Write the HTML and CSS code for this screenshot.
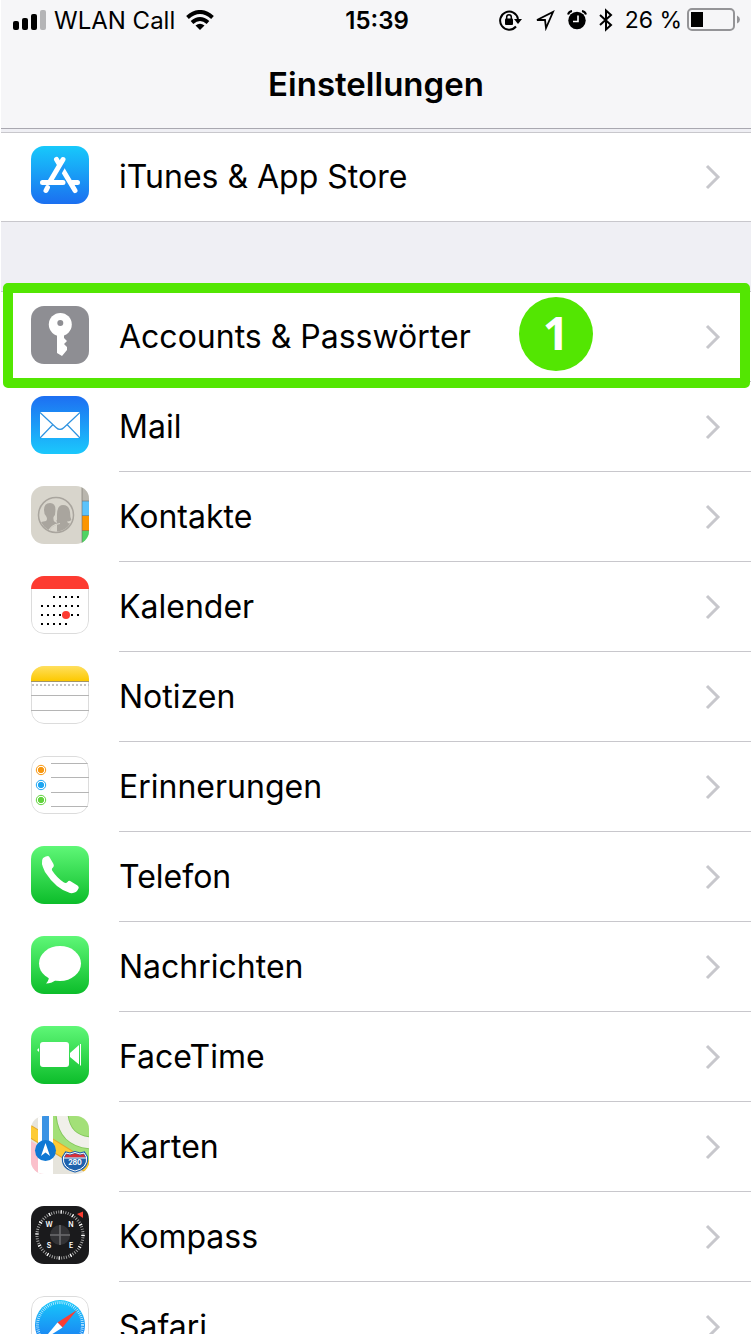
FILE: index.html
```html
<!DOCTYPE html>
<html lang="de">
<head>
    <meta charset="UTF-8">
    <meta name="viewport" content="width=device-width, initial-scale=1.0">
    <title>Einstellungen</title>
    <link rel="stylesheet" href="styles.css">
</head>
<body>
    <div class="phone">
        <header class="header">
            <div class="status-bar">
                <div class="status-left">
                    <svg class="signal" width="34" height="20" viewBox="0 0 34 20">
                        <rect x="0" y="11" width="6" height="9" rx="2"/>
                        <rect x="9" y="8" width="6" height="12" rx="2"/>
                        <rect x="18" y="4" width="6" height="16" rx="2"/>
                        <rect x="27" y="0" width="6" height="20" rx="2" fill="#b4b4b6"/>
                    </svg>
                    <span>WLAN Call</span>
                    <svg class="wifi" width="28" height="20" viewBox="0 0 28 20" fill="none" stroke="#000" stroke-width="4">
                        <path d="M1.500 7.500Q14 -3.500 26.500 7.500"/>
                        <path d="M6 12.500Q14 5.500 22 12.500"/>
                        <path d="M14 20L9.500 15.500Q14 12 18.500 15.500Z" fill="#000" stroke="none"/>
                    </svg>
                </div>
                <span class="time">15:39</span>
                <div class="status-right">
                    <svg width="24" height="22" viewBox="0 0 24 22">
                        <path d="M17 17.500A9 9 0 1 1 19 10" fill="none" stroke="#000" stroke-width="2"/>
                        <path d="M15 10H23L19 15Z"/>
                        <rect x="6" y="9.500" width="8" height="6.500" rx="1"/>
                        <path d="M7.700 10V8a2.300 2.300 0 0 1 4.600 0v2" fill="none" stroke="#000" stroke-width="1.500"/>
                    </svg>
                    <svg width="20" height="22" viewBox="0 0 20 22" fill="none" stroke="#000" stroke-width="1.800">
                        <path d="M2 11L18 3L11 19L10 11Z" stroke-linejoin="miter"/>
                    </svg>
                    <svg width="20" height="22" viewBox="0 0 20 22">
                        <circle cx="10" cy="11.500" r="8.700"/>
                        <path d="M1 5.500Q2 2.500 5 2M19 5.500Q18 2.500 15 2" fill="none" stroke="#000" stroke-width="2"/>
                        <path d="M11 6.500V12.500H6" fill="none" stroke="#fff" stroke-width="1.600"/>
                    </svg>
                    <svg width="14" height="24" viewBox="0 0 14 24" fill="none" stroke="#000" stroke-width="2">
                        <path d="M1 7L12 17L7 21.500V2.500L12 7L1 17"/>
                    </svg>
                    <span class="percent">26 %</span>
                    <svg class="battery" width="54" height="24" viewBox="0 0 54 24">
                        <rect x="1" y="1" width="46" height="21" rx="4" fill="none" stroke="#949497" stroke-width="2"/>
                        <rect x="4" y="4" width="12" height="15"/>
                        <path d="M50 7.500Q53 9 53 11.500Q53 14 50 15.500Z" fill="#949497"/>
                    </svg>
                </div>
            </div>
            <h1 class="title">Einstellungen</h1>
        </header>

        <main>
            <ul class="group group-store">
                <li>
                    <a href="#" class="row">
                        <svg class="app-icon" viewBox="0 0 58 58">
                            <defs>
                                <linearGradient id="store" x1="0" y1="0" x2="0" y2="1"><stop offset="0" stop-color="#17c9fb"/><stop offset="1" stop-color="#1b6ff0"/></linearGradient>
                                <linearGradient id="mail" x1="0" y1="0" x2="0" y2="1"><stop offset="0" stop-color="#1d6ff2"/><stop offset="1" stop-color="#1bc8fc"/></linearGradient>
                                <linearGradient id="green" x1="0" y1="0" x2="0" y2="1"><stop offset="0" stop-color="#5ff777"/><stop offset="1" stop-color="#0cbd2a"/></linearGradient>
                                <linearGradient id="notes" x1="0" y1="0" x2="0" y2="1"><stop offset="0" stop-color="#ffdf5e"/><stop offset="1" stop-color="#fdc900"/></linearGradient>
                            </defs>
                            <rect width="58" height="58" fill="url(#store)"/>
                            <g fill="none" stroke="#fff" stroke-width="5" stroke-linecap="round">
                                <path d="M25.500 13.500L44 44.500"/>
                                <path d="M32 18L22 36" stroke="#1e9bf7" stroke-width="7" stroke-linecap="butt"/>
                                <path d="M32 13.500L19 35.500M16.500 41.500L15 44.500M11.500 36.500H32M41.500 36.500H46.500"/>
                            </g>
                        </svg>
                        <span class="label">iTunes &amp; App Store</span>
                        <svg class="chevron" viewBox="0 0 16 26"><path d="M2 2L13 13L2 24"/></svg>
                    </a>
                </li>
            </ul>

            <ul class="group">
                <li>
                    <a href="#" class="row">
                        <svg class="app-icon" viewBox="0 0 58 58">
                            <rect width="58" height="58" fill="#8e8e93"/>
                            <circle cx="29.300" cy="18.500" r="11.500" fill="#fff"/>
                            <circle cx="29.300" cy="17" r="3" fill="#8e8e93"/>
                            <path d="M26 28H33V32L36 35L33 38L36 41V44L31 50L26 47Z" fill="#fff"/>
                        </svg>
                        <span class="label">Accounts &amp; Passwörter</span>
                        <svg class="chevron" viewBox="0 0 16 26"><path d="M2 2L13 13L2 24"/></svg>
                        <span class="highlight"></span>
                        <span class="step">1</span>
                    </a>
                </li>
                <li>
                    <a href="#" class="row">
                        <svg class="app-icon" viewBox="0 0 58 58">
                            <rect width="58" height="58" fill="url(#mail)"/>
                            <rect x="9" y="16" width="40" height="26" fill="#fff"/>
                            <path d="M9 16.500L25 31.500Q29 35.500 33 31.500L49 16.500M9 42L21.500 29M49 42L36.500 29" fill="none" stroke="#2f93e0" stroke-width="1.200"/>
                        </svg>
                        <span class="label">Mail</span>
                        <svg class="chevron" viewBox="0 0 16 26"><path d="M2 2L13 13L2 24"/></svg>
                    </a>
                </li>
                <li>
                    <a href="#" class="row">
                        <svg class="app-icon" viewBox="0 0 58 58">
                            <rect width="58" height="58" fill="#d8d5cc"/>
                            <rect x="51" width="7" height="15" fill="#b9b6ae"/>
                            <rect x="51" y="15" width="7" height="15" fill="#5cc3fb"/>
                            <rect x="51" y="30" width="7" height="15" fill="#fb9500"/>
                            <rect x="51" y="45" width="7" height="13" fill="#4fd364"/>
                            <path d="M51 0V58M51 15H58M51 29.500H58M51 44.500H58" stroke="#716f69" stroke-opacity=".6"/>
                            <clipPath id="people"><circle cx="25" cy="29" r="16.500"/></clipPath>
                            <g clip-path="url(#people)" fill="#a9a59e">
                                <path d="M26 36Q25 35 26 33Q25 19 32 19Q38 19 39 26Q39 31 40.500 34Q38 35.500 36 35.500L37 37Q43 38 45 42L42 48H26Z"/>
                                <path d="M13 24Q13 17 19 17Q25 17 24.500 25Q24.500 29 22.500 31Q22 35 24 36L28 38Q19 40 18 47H4V39Q8 36 15 35Q17 33 15 30Q13 28 13 24Z"/>
                                <path d="M17.500 47Q18.500 39 29 37.500" fill="none" stroke="#d8d5cc" stroke-width="1.200"/>
                                <path d="M25.300 19V34" stroke="#d8d5cc"/>
                            </g>
                            <circle cx="25" cy="29" r="17.500" fill="none" stroke="#a9a59e" stroke-width="1.500"/>
                        </svg>
                        <span class="label">Kontakte</span>
                        <svg class="chevron" viewBox="0 0 16 26"><path d="M2 2L13 13L2 24"/></svg>
                    </a>
                </li>
                <li>
                    <a href="#" class="row">
                        <svg class="app-icon" viewBox="0 0 58 58">
                            <rect x=".5" y=".5" width="57" height="57" rx="12.500" fill="#fff" stroke="#dcdcdc"/>
                            <rect width="58" height="13" fill="#fd3b31"/>
                            <path d="M22 21H48M10 30H48M10 39H48M10 48H36" stroke="#000" stroke-width="2" stroke-dasharray="2 4"/>
                            <circle cx="35" cy="39" r="4" fill="#fd3b31"/>
                        </svg>
                        <span class="label">Kalender</span>
                        <svg class="chevron" viewBox="0 0 16 26"><path d="M2 2L13 13L2 24"/></svg>
                    </a>
                </li>
                <li>
                    <a href="#" class="row">
                        <svg class="app-icon" viewBox="0 0 58 58">
                            <rect x=".5" y=".5" width="57" height="57" rx="12.500" fill="#fff" stroke="#dcdcdc"/>
                            <rect width="58" height="15" fill="url(#notes)"/>
                            <path d="M0 15.500H58" stroke="#a39566"/>
                            <path d="M1 19H58" stroke="#c4c4c4" stroke-width="2" stroke-dasharray="2 2"/>
                            <path d="M0 29.500H58M0 44.500H58" stroke="#b5b5b5"/>
                        </svg>
                        <span class="label">Notizen</span>
                        <svg class="chevron" viewBox="0 0 16 26"><path d="M2 2L13 13L2 24"/></svg>
                    </a>
                </li>
                <li>
                    <a href="#" class="row">
                        <svg class="app-icon" viewBox="0 0 58 58">
                            <rect x=".5" y=".5" width="57" height="57" rx="12.500" fill="#fff" stroke="#dcdcdc"/>
                            <path d="M20 7.500H57M20 21.500H58M20 36.500H58M20 50.500H57" stroke="#b5b5b5"/>
                            <g fill="#f7960f" stroke="#f7960f"><circle cx="10" cy="14" r="2.700"/><circle cx="10" cy="14" r="4.700" fill="none"/></g>
                            <g fill="#1ca5f2" stroke="#1ca5f2"><circle cx="10" cy="29" r="2.700"/><circle cx="10" cy="29" r="4.700" fill="none"/></g>
                            <g fill="#60d23c" stroke="#60d23c"><circle cx="10" cy="44" r="2.700"/><circle cx="10" cy="44" r="4.700" fill="none"/></g>
                        </svg>
                        <span class="label">Erinnerungen</span>
                        <svg class="chevron" viewBox="0 0 16 26"><path d="M2 2L13 13L2 24"/></svg>
                    </a>
                </li>
                <li>
                    <a href="#" class="row">
                        <svg class="app-icon" viewBox="0 0 58 58">
                            <rect width="58" height="58" fill="url(#green)"/>
                            <path d="M12 12Q15 10 17 10Q18 10 19 12L22.500 18Q23.500 20 22 21.500Q20 23 21.500 25Q26 32 33 36.500Q35 37.500 36.500 36Q38 34 40 35.500L46.500 39.500Q48.500 41 47.500 42.500Q45 48 39 47Q25 43 14 26Q9 16 12 12Z" fill="#fff"/>
                        </svg>
                        <span class="label">Telefon</span>
                        <svg class="chevron" viewBox="0 0 16 26"><path d="M2 2L13 13L2 24"/></svg>
                    </a>
                </li>
                <li>
                    <a href="#" class="row">
                        <svg class="app-icon" viewBox="0 0 58 58">
                            <rect width="58" height="58" fill="url(#green)"/>
                            <ellipse cx="29" cy="27.500" rx="21" ry="17.500" fill="#fff"/>
                            <path d="M18 40Q18 45 15 47.500Q21 47.500 26 43Z" fill="#fff"/>
                        </svg>
                        <span class="label">Nachrichten</span>
                        <svg class="chevron" viewBox="0 0 16 26"><path d="M2 2L13 13L2 24"/></svg>
                    </a>
                </li>
                <li>
                    <a href="#" class="row">
                        <svg class="app-icon" viewBox="0 0 58 58">
                            <rect width="58" height="58" fill="url(#green)"/>
                            <rect x="9" y="16" width="29" height="25" rx="3" fill="#fff"/>
                            <path d="M39 27L48 19V38.500L39 31ZM49 18H50V39.500H49ZM8 22V26L6 24Z" fill="#fff"/>
                        </svg>
                        <span class="label">FaceTime</span>
                        <svg class="chevron" viewBox="0 0 16 26"><path d="M2 2L13 13L2 24"/></svg>
                    </a>
                </li>
                <li>
                    <a href="#" class="row">
                        <svg class="app-icon" viewBox="0 0 58 58">
                            <rect width="58" height="58" fill="#e6e4dc"/>
                            <path d="M20 0H58V50L20 27Z" fill="#a3e078"/>
                            <path d="M0 25L22 38V58H0Z" fill="#fbc0cb"/>
                            <path d="M31 -2Q33 25 60 27" fill="none" stroke="#83c65b" stroke-width="13"/>
                            <path d="M31 -2Q33 25 60 27" fill="none" stroke="#f1f0ea" stroke-width="11"/>
                            <path d="M-3 14L60 53" stroke="#e3a82d" stroke-width="12"/>
                            <path d="M-3 14L60 53" stroke="#fdcb35" stroke-width="10"/>
                            <rect x="7" width="15" height="58" fill="#fff"/>
                            <rect x="11" width="7" height="32" fill="#3b93e4"/>
                            <circle cx="14.500" cy="34.500" r="10.500" fill="#0f78d4"/>
                            <path d="M14.500 27L19 40L14.500 36.500L10 40Z" fill="#fff"/>
                            <path d="M35 37L39 38L44 36.500L49 38L53 37L55.500 41Q57 52 44 55Q31 52 32.500 41Z" fill="#1f62ad" stroke="#1f62ad" stroke-width="3"/>
                            <path d="M35 37L39 38L44 36.500L49 38L53 37L55.500 41Q57 52 44 55Q31 52 32.500 41Z" fill="#1f62ad" stroke="#fff"/>
                            <path d="M35.500 38L39 39L44 37.500L49 39L52.500 38L54.500 41.500H33.500Z" fill="#d6303a"/>
                            <path d="M33 42H55" stroke="#fff"/>
                            <text class="shield" x="44" y="49">280</text>
                        </svg>
                        <span class="label">Karten</span>
                        <svg class="chevron" viewBox="0 0 16 26"><path d="M2 2L13 13L2 24"/></svg>
                    </a>
                </li>
                <li>
                    <a href="#" class="row">
                        <svg class="app-icon" viewBox="0 0 58 58">
                            <rect width="58" height="58" fill="#1a1a1c"/>
                            <circle cx="29" cy="29" r="23" fill="none" stroke="#a8a8a8" stroke-width="3" stroke-dasharray=".9 1.508"/>
                            <circle cx="29" cy="29" r="23" fill="none" stroke="#fff" stroke-width="3.500" stroke-dasharray="1.200 10.843"/>
                            <circle cx="29" cy="29" r="10" fill="#333336"/>
                            <path d="M29 19V39M19 29H39" stroke="#6d6d70" stroke-width="1.600"/>
                            <path d="M46 8L52 5.500L52 12Z" fill="#fa3b30"/>
                            <g class="compass-text">
                                <text x="18" y="21">W</text>
                                <text x="40" y="21">N</text>
                                <text x="18" y="42">S</text>
                                <text x="40" y="42">E</text>
                            </g>
                        </svg>
                        <span class="label">Kompass</span>
                        <svg class="chevron" viewBox="0 0 16 26"><path d="M2 2L13 13L2 24"/></svg>
                    </a>
                </li>
                <li>
                    <a href="#" class="row">
                        <svg class="app-icon" viewBox="0 0 58 58">
                            <rect x=".5" y=".5" width="57" height="57" rx="12.500" fill="#fff" stroke="#dcdcdc"/>
                            <circle cx="29" cy="29" r="25" fill="url(#store)"/>
                            <circle cx="29" cy="29" r="22.500" fill="none" stroke="#d5f1ff" stroke-width="3" stroke-dasharray=".7 1.264"/>
                            <path d="M46 14L31.500 31.500L26.500 26.500Z" fill="#fb3d33"/>
                            <path d="M12 44L26.500 26.500L31.500 31.500Z" fill="#fff"/>
                        </svg>
                        <span class="label">Safari</span>
                        <svg class="chevron" viewBox="0 0 16 26"><path d="M2 2L13 13L2 24"/></svg>
                    </a>
                </li>
            </ul>
        </main>
    </div>
</body>
</html>
```
FILE: styles.css
```css
* {
    box-sizing: border-box;
}
body {
    margin: 0;
    padding: 0 3px 0 1px;
    height: 100vh;
    overflow: hidden;
    font-family: Inter, "Liberation Sans", sans-serif;
    color: #000;
    background: #fff;
}
.phone {
    min-height: 100%;
    background: #efeff4;
}

/* header */
.header {
    height: 129px;
    background: #f6f6f8;
    border-bottom: 1px solid #a9a8b0;
}
.status-bar {
    display: grid;
    grid-template-columns: 1fr auto 1fr;
    align-items: center;
    height: 40px;
    padding: 0 10px 0 12px;
    font-size: 24px;
}
.status-left,
.status-right {
    display: flex;
    align-items: center;
}
.status-left {
    gap: 7px;
}
.wifi {
    margin-left: 4px;
}
.status-right {
    justify-content: flex-end;
    gap: 12px;
}
.percent {
    font-size: 23px;
}
.battery {
    margin-left: -7px;
}
.time {
    font-weight: 600;
}
.title {
    margin: 0;
    font-size: 33px;
    line-height: 88px;
    font-weight: 600;
    text-align: center;
}

/* list */
.group {
    list-style: none;
    margin: 69px 0 0;
    padding: 0;
    background: #fff;
    border-top: 1px solid #c8c7cc;
}
.group-store {
    margin-top: 3px;
    border-bottom: 1px solid #c8c7cc;
}
.row {
    position: relative;
    display: flex;
    align-items: center;
    height: 90px;
    padding: 0 30px;
    color: #000;
    text-decoration: none;
}
.group-store .row {
    height: 88px;
}
.app-icon {
    flex: none;
    width: 58px;
    height: 58px;
    margin-bottom: 4px;
    border-radius: 13px;
}
.label {
    flex: 1;
    margin-left: 30px;
    font-size: 32px;
    line-height: 40px;
}
.row::after {
    content: "";
    position: absolute;
    left: 118px;
    right: 0;
    bottom: 0;
    height: 1px;
    background: #c8c7cc;
}
.group-store .row::after {
    display: none;
}
.chevron {
    width: 16px;
    height: 26px;
    fill: none;
    stroke: #c7c7cc;
    stroke-width: 3;
}

/* marker for the step to tap */
.highlight {
    position: absolute;
    z-index: 1;
    inset: -9px 1px -6px 2px;
    border: 10px solid #53e602;
    border-radius: 5px;
}
.step {
    position: absolute;
    z-index: 1;
    top: 5px;
    left: 518px;
    width: 74px;
    height: 74px;
    border-radius: 50%;
    background: #53e602;
    color: #fff;
    font-family: "Open Sans", "Noto Sans", sans-serif;
    font-size: 46px;
    line-height: 70px;
    font-weight: 700;
    text-align: center;
}

/* text inside the icons */
.shield {
    fill: #fff;
    font-size: 7px;
    font-weight: 700;
    text-anchor: middle;
}
.compass-text {
    fill: #fff;
    font-size: 7px;
    font-weight: 600;
    text-anchor: middle;
}
```
